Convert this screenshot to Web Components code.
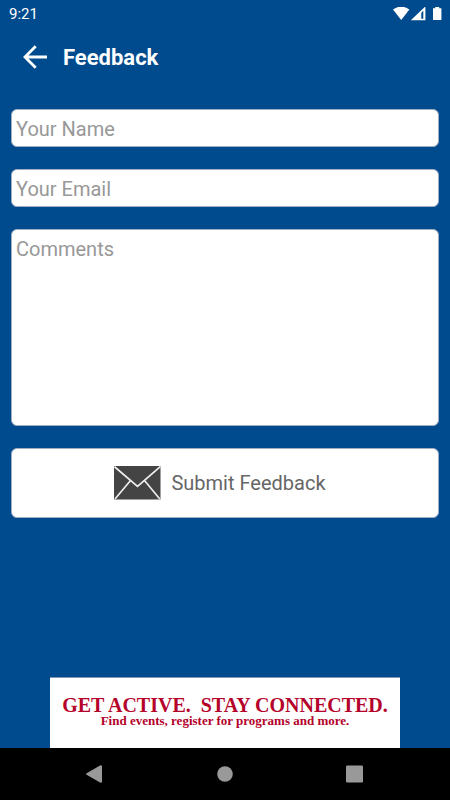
<!DOCTYPE html>
<html lang="en">
<head>
<meta charset="utf-8">
<meta name="viewport" content="width=device-width, initial-scale=1">
<title>Feedback</title>
<style>
  html, body { height: 100%; margin: 0; }
  body { background: #004b8d; font-family: Roboto, "Liberation Sans", sans-serif; }
</style>
</head>
<body>
<feedback-app></feedback-app>
<script>
class BaseElement extends HTMLElement {
  constructor() {
    super();
    this.attachShadow({ mode: "open" }).innerHTML = this.render();
  }
}

customElements.define("status-bar", class extends BaseElement {
  render() {
    return `<style>
      :host { display: flex; align-items: center; justify-content: space-between; height: 28px; padding: 0 8px 0 9px; color: #fff; font-size: 15px; line-height: 28px; }
      svg { display: block; }
    </style>
    <time>9:21</time>
    <svg width="49" height="14" viewBox="0 0 49 14" fill="#fff" aria-hidden="true">
      <path d="M0 2.6Q8.2-3.4 16.4 2.6L8.2 13Z"/>
      <path fill-rule="evenodd" d="M17.8 13.2 32.4-.6v13.8ZM28.3 11.8h2V3.8l-2 2Z"/>
      <path d="M40 1.2h2.2V0h4v1.2h2.2V13H40Z"/>
    </svg>`;
  }
});

customElements.define("app-header", class extends BaseElement {
  render() {
    return `<style>
      :host { display: flex; align-items: center; height: 58px; padding: 0 20px; gap: 13px; color: #fff; }
      button { display: flex; align-items: center; justify-content: center; width: 30px; height: 30px; padding: 0; border: 0; background: none; color: inherit; }
      h1 { margin: 0; padding-top: 2px; font-size: 22px; line-height: 28px; font-weight: 700; }
    </style>
    <button type="button" aria-label="Back">
      <svg width="24" height="24" viewBox="0 0 24 24" fill="none" stroke="currentColor" stroke-width="2.8" aria-hidden="true"><path d="M24 12H2.2M12.7 1.3 2 12l10.7 10.7"/></svg>
    </button>
    <h1><slot></slot></h1>`;
  }
});

customElements.define("text-field", class extends HTMLElement {
  connectedCallback() {
    if (this.shadowRoot) return;
    const label = this.getAttribute("label");
    const type = this.getAttribute("type");
    const control = type === "multiline"
      ? `<textarea placeholder="${label}" aria-label="${label}"></textarea>`
      : `<input type="${type}" placeholder="${label}" aria-label="${label}">`;
    this.attachShadow({ mode: "open" }).innerHTML = `<style>
      :host { display: block; }
      input, textarea { display: block; box-sizing: border-box; width: 100%; margin: 0; padding: 6px 4px 4px; border: 1px solid #a3adc0; border-radius: 6px; background: #fff; color: #444; font: 20px/26px Roboto, "Liberation Sans", sans-serif; outline: 0; }
      input { height: 38px; }
      textarea { height: 197px; resize: none; }
      ::placeholder { color: #989898; opacity: 1; }
    </style>${control}`;
  }
});

customElements.define("submit-button", class extends BaseElement {
  render() {
    return `<style>
      :host { display: block; }
      button { display: flex; align-items: center; justify-content: center; gap: 10px; width: 100%; height: 70px; padding: 0 10px 0 0; border: 1px solid #a3adc0; border-radius: 6px; background: #fff; color: #666; font: 20px/26px Roboto, "Liberation Sans", sans-serif; }
      svg { display: block; }
    </style>
    <button type="submit">
      <svg width="47" height="34" viewBox="0 0 47 34" fill="none" aria-hidden="true">
        <path fill="#444" d="M0 0h46.5v33.4H0Z"/>
        <path stroke="#eee" stroke-width="1.7" d="M.5.7 23.5 20.5 46.3.7M1 33 16.5 14.5M45.8 33 30.5 14.5"/>
      </svg>
      <span><slot></slot></span>
    </button>`;
  }
});

customElements.define("promo-banner", class extends BaseElement {
  render() {
    return `<style>
      :host { display: block; }
      a { display: block; box-sizing: border-box; width: 350px; max-width: 100%; height: 71px; margin: 0 auto; padding-top: 18px; background: #fff; border-top: 1px solid #8794b5; color: #b5022a; text-align: center; text-decoration: none; font-family: "Liberation Serif", serif; font-weight: 700; white-space: pre; }
      strong { display: block; font-size: 20px; line-height: 18px; }
      span { display: block; font-size: 13px; line-height: 14px; }
    </style>
    <a href="#"><strong>GET ACTIVE.  STAY CONNECTED.</strong><span>Find events, register for programs and more.</span></a>`;
  }
});

customElements.define("system-nav", class extends BaseElement {
  render() {
    return `<style>
      :host { display: flex; align-items: center; justify-content: center; gap: 100px; height: 52px; background: #000; }
      button { display: flex; align-items: center; justify-content: center; width: 30px; height: 30px; padding: 0; border: 0; background: none; }
      svg { fill: #999; }
    </style>
    <button type="button" aria-label="Back"><svg width="18" height="18" viewBox="0 0 18 18"><path d="M.6 8.2 14.5.2Q16 0 16 1.4v15.2q0 1.4-1.5 1.2L.6 9.8Q-.4 9 .6 8.2Z"/></svg></button>
    <button type="button" aria-label="Home"><svg width="16" height="16" viewBox="0 0 16 16"><circle cx="8" cy="8" r="7.8"/></svg></button>
    <button type="button" aria-label="Recent apps"><svg width="18" height="18" viewBox="0 0 18 18"><rect y=".5" width="17" height="17" rx="1.2"/></svg></button>`;
  }
});

customElements.define("feedback-app", class extends BaseElement {
  render() {
    return `<style>
      :host { display: flex; flex-direction: column; min-height: 100vh; }
      main { flex: 1; padding: 23px 11px; }
      form { display: flex; flex-direction: column; gap: 22px; }
    </style>
    <status-bar></status-bar>
    <app-header>Feedback</app-header>
    <main><form>
      <text-field type="text" label="Your Name"></text-field>
      <text-field type="email" label="Your Email"></text-field>
      <text-field type="multiline" label="Comments"></text-field>
      <submit-button>Submit Feedback</submit-button>
    </form></main>
    <promo-banner></promo-banner>
    <system-nav></system-nav>`;
  }
});
</script>
</body>
</html>
